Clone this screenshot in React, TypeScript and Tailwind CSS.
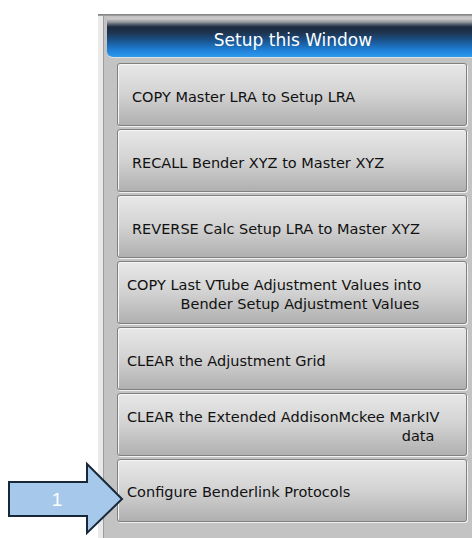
import React from "react";

const font = { fontFamily: '"DejaVu Sans", Verdana, sans-serif' };

function Btn({ children, pl = "pl-[14px]", pt = "" }: { children: React.ReactNode; pl?: string; pt?: string }) {
  return (
    <div
      className={`h-[63px] w-[350px] rounded-[3px] border border-[#808080] bg-gradient-to-b from-[#e8e8e8] via-[#d2d2d2] to-[#b0b0b0] shadow-[inset_1px_1px_0_#f6f6f6,1px_1px_0_#f0f0f0] flex flex-col justify-center ${pl} ${pt} text-[14.5px] leading-[19px] text-[#111]`}
    >
      {children}
    </div>
  );
}

export default function App() {
  return (
    <div className="relative w-[472px] h-[538px] bg-white overflow-hidden flex" style={font}>
      <div className="w-[98px] shrink-0" />
      <div className="flex-1 mt-[14px] flex flex-col">
        <div className="h-[2px] bg-gradient-to-b from-[#7a7a7a] to-[#a8a8a8]" />
        <div className="flex-1 flex">
          <div className="w-[5px] bg-[#e9e9e9]" />
          <div className="w-[1px] bg-[#9c9c9c]" />
          <div className="flex-1 bg-[#c3c3c3] flex flex-col pt-[2px] pl-[3px]">
            <div className="h-[40px] rounded-bl-[6px] bg-[linear-gradient(to_bottom,#d4d4d4_0px,#9a9a9a_4px,#5a6878_6px,#1c2a3e_9px,#1e3550_15px,#1a5a9a_24px,#1f80d6_32px,#2a96ea_38px,#3aa0ee_40px)] border-b border-[#e0e0e0] flex items-center justify-center text-white text-[17px] pt-[7px] pl-[7px]">
              Setup this Window
            </div>
            <div className="flex flex-col gap-[3px] pl-[10px] pt-[5px]">
              <Btn pl="pl-[14px]" pt="pt-[5px]">COPY Master LRA to Setup LRA</Btn>
              <Btn pl="pl-[14px]" pt="pt-[5px]">RECALL Bender XYZ to Master XYZ</Btn>
              <Btn pl="pl-[14px]" pt="pt-[5px]">REVERSE Calc Setup LRA to Master XYZ</Btn>
              <Btn pl="pl-[9px]" pt="pt-[5px]">
                <div className="self-start flex flex-col items-end">
                  <div>COPY Last VTube Adjustment Values into</div>
                  <div className="pr-[2px]">Bender Setup Adjustment Values</div>
                </div>
              </Btn>
              <Btn pl="pl-[9px]" pt="pt-[5px]">CLEAR the Adjustment Grid</Btn>
              <Btn pl="pl-[9px]" pt="pt-[5px]">
                <div className="self-start flex flex-col items-end">
                  <div>CLEAR the Extended AddisonMckee MarkIV</div>
                  <div className="pr-[5px]">data</div>
                </div>
              </Btn>
              <Btn pl="pl-[9px]" pt="pt-[3px]">Configure Benderlink Protocols</Btn>
            </div>
          </div>
        </div>
      </div>
      <svg className="absolute left-0 top-0" width="140" height="538" viewBox="0 0 140 538">
        <polygon
          points="9,482 87,482 87,464 122,499 87,533 87,516 9,516"
          fill="#a6c9eb"
          stroke="#17283a"
          strokeWidth="2"
          strokeLinejoin="miter"
        />
        <text x="57" y="506" fill="#ffffff" fontSize="19" textAnchor="middle" fontFamily="Liberation Sans, Arial, sans-serif">1</text>
      </svg>
    </div>
  );
}
